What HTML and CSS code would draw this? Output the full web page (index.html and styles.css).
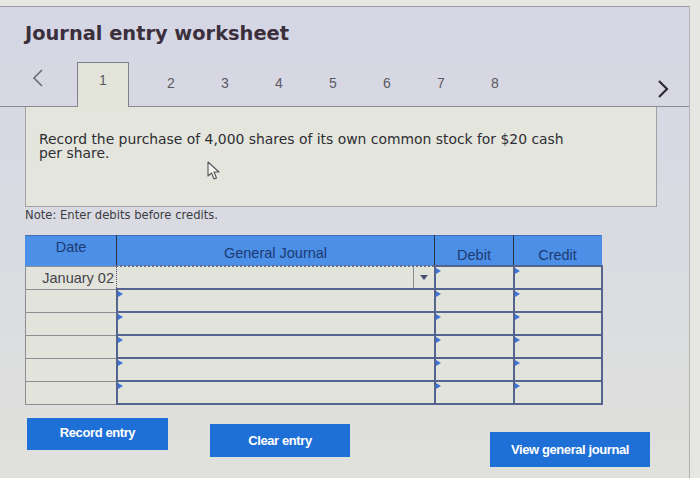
FILE: index.html
```html
<!DOCTYPE html>
<html lang="en"><head>
    <meta charset="UTF-8">
    <meta name="viewport" content="width=device-width, initial-scale=1.0">
    <title>Journal entry worksheet</title>
    <link rel="stylesheet" href="styles.css">
</head>
<body>
    <div class="screen">
        <h1 class="title">Journal entry worksheet</h1>

        <div class="tabs">
            <span class="nav prev">
                <svg width="12" height="18" viewBox="0 0 12 18"><path d="M10 1 L2 9 L10 17" fill="none" stroke="#6a6a72" stroke-width="1.6"/></svg>
            </span>
            <span class="tab active">1</span>
            <span class="tab">2</span>
            <span class="tab">3</span>
            <span class="tab">4</span>
            <span class="tab">5</span>
            <span class="tab">6</span>
            <span class="tab">7</span>
            <span class="tab">8</span>
            <span class="nav next">
                <svg width="12" height="18" viewBox="0 0 12 18"><path d="M2 1 L10 9 L2 17" fill="none" stroke="#2c2a36" stroke-width="2.2"/></svg>
            </span>
        </div>

        <div class="question">
            <p>Record the purchase of 4,000 shares of its own common stock for $20 cash per share.</p>
            <svg class="pointer" width="14" height="20" viewBox="0 0 14 20"><path d="M1 1 L1 15 L4.5 12 L7 18 L9.5 17 L7 11 L12 11 Z" fill="#f4f4ee" stroke="#55555c" stroke-width="1.1" stroke-linejoin="round"/></svg>
        </div>

        <p class="note">Note: Enter debits before credits.</p>

        <table class="journal">
            <thead>
                <tr>
                    <th class="c-date">Date</th>
                    <th class="c-acct">General Journal</th>
                    <th class="c-debit">Debit</th>
                    <th class="c-credit">Credit</th>
                </tr>
            </thead>
            <tbody>
                <tr>
                    <td class="c-date focus">January 02</td>
                    <td class="c-acct select"><span class="drop"></span></td>
                    <td class="entry"></td>
                    <td class="entry"></td>
                </tr>
                <tr><td class="c-date"></td><td class="entry"></td><td class="entry"></td><td class="entry"></td></tr>
                <tr><td class="c-date"></td><td class="entry"></td><td class="entry"></td><td class="entry"></td></tr>
                <tr><td class="c-date"></td><td class="entry"></td><td class="entry"></td><td class="entry"></td></tr>
                <tr><td class="c-date"></td><td class="entry"></td><td class="entry"></td><td class="entry"></td></tr>
                <tr><td class="c-date"></td><td class="entry"></td><td class="entry"></td><td class="entry"></td></tr>
            </tbody>
        </table>

        <div class="actions">
            <button class="btn record">Record entry</button>
            <button class="btn clear">Clear entry</button>
            <button class="btn view">View general journal</button>
        </div>
    </div>
</body>
</html>
```

FILE: styles.css
```css
body {
    margin: 0;
    background: #e6e6e2;
    font-family: "DejaVu Sans", Verdana, sans-serif;
}
.screen {
    width: 690px;
    height: 472px;
    margin-top: 6px;
    border-top: 1px solid #9a9aa6;
    border-right: 1px solid #b4b4b4;
    background: linear-gradient(180deg, #d5d6e4 0%, #d9dae2 40%, #e0e1dc 100%);
    box-sizing: border-box;
    position: relative;
}
.title {
    margin: 0;
    padding: 15px 0 0 25px;
    font-size: 19.4px;
    line-height: 24px;
    font-weight: bold;
    color: #3b2f3c;
}
.tabs {
    display: flex;
    align-items: stretch;
    height: 44px;
    margin-top: 16px;
    border-bottom: 1px solid #8c8c94;
}
.nav {
    display: flex;
    align-items: flex-start;
}
.prev {
    width: 44px;
    padding: 7px 0 0 32px;
    box-sizing: border-box;
}
.next {
    margin-left: auto;
    margin-right: 20px;
    padding-top: 18px;
}
.tab {
    width: 54px;
    text-align: center;
    font-family: "Liberation Sans", Arial, sans-serif;
    font-size: 14px;
    color: #5a5a62;
    padding-top: 13px;
}
.tab.active {
    width: 50px;
    margin-left: 33px;
    margin-right: 15px;
    padding-top: 9px;
    background: #e3e4da;
    border: 1px solid #80808a;
    border-bottom: none;
    margin-bottom: -1px;
}
.question {
    position: relative;
    margin-left: 25px;
    width: 632px;
    height: 100px;
    box-sizing: border-box;
    padding: 25px 80px 0 13px;
    background: #e4e5dc;
    border: 1px solid #a2a2a2;
    border-top: none;
}
.question p {
    margin: 0;
    font-size: 13.9px;
    line-height: 14px;
    color: #2e2e34;
}
.pointer {
    position: absolute;
    left: 181px;
    top: 54px;
}
.note {
    margin: 1px 0 0 25px;
    font-size: 11.6px;
    line-height: 14px;
    color: #3c3c44;
}
.journal {
    margin: 13px 0 0 25px;
    border-collapse: collapse;
    table-layout: fixed;
    width: 572px;
    font-family: "Liberation Sans", Arial, sans-serif;
}
.journal th {
    height: 25px;
    padding: 0;
    background: #4b8fe6;
    color: #1d3a73;
    font-size: 14.5px;
    font-weight: normal;
    border-top: 1px solid #3c6fb8;
    border-left: 1px solid #2a2f44;
    border-right: 1px solid #2a2f44;
}
.journal th:first-child {
    border-left: 1px solid #4b8fe6;
}
.journal th:last-child {
    border-right: 1px solid #4b8fe6;
}
.c-date { width: 90px; }
.c-acct { width: 317px; }
.c-debit { width: 78px; }
.c-credit { width: 87px; }
.journal th.c-date { vertical-align: top; padding-top: 3px; }
.journal th.c-acct { padding-top: 4px; }
.journal th.c-debit,
.journal th.c-credit { vertical-align: bottom; padding-bottom: 2px; }
.journal td {
    height: 21px;
    padding: 0;
    background: #e2e3da;
    position: relative;
}
.journal td.c-date {
    border: 1px solid #8e8e92;
    text-align: right;
    padding-right: 2px;
    font-size: 14.5px;
    color: #45454c;
}
.journal td.focus {
    border-right: 1px dotted #55556a;
}
.journal td.entry {
    border: 2px solid #55648e;
}
.journal td.entry::before {
    content: "";
    position: absolute;
    left: 0;
    top: 1px;
    border-left: 5px solid #3d74d6;
    border-top: 3px solid transparent;
    border-bottom: 3px solid transparent;
}
.journal td.select {
    border-top: 2px dotted #6a6a80;
    border-bottom: 2px dotted #6a6a80;
    border-left: 1px dotted #6a6a80;
}
.drop {
    position: absolute;
    right: 0;
    top: 0;
    bottom: 0;
    width: 20px;
    border-left: 1px solid #8a8a92;
}
.drop::after {
    content: "";
    position: absolute;
    left: 6px;
    top: 8px;
    border-top: 5px solid #4a5070;
    border-left: 4px solid transparent;
    border-right: 4px solid transparent;
}
.actions {
    display: flex;
    align-items: flex-start;
    margin: 13px 0 0 27px;
}
.btn {
    border: none;
    background: #1f70d6;
    color: #ffffff;
    font-family: "Liberation Sans", Arial, sans-serif;
    font-weight: bold;
    font-size: 13px;
    letter-spacing: -0.4px;
    padding: 0;
}
.record {
    width: 141px;
    height: 32px;
    padding-bottom: 4px;
}
.clear {
    width: 140px;
    height: 33px;
    margin: 6px 0 0 42px;
}
.view {
    width: 160px;
    height: 35px;
    margin: 14px 0 0 140px;
}
```
